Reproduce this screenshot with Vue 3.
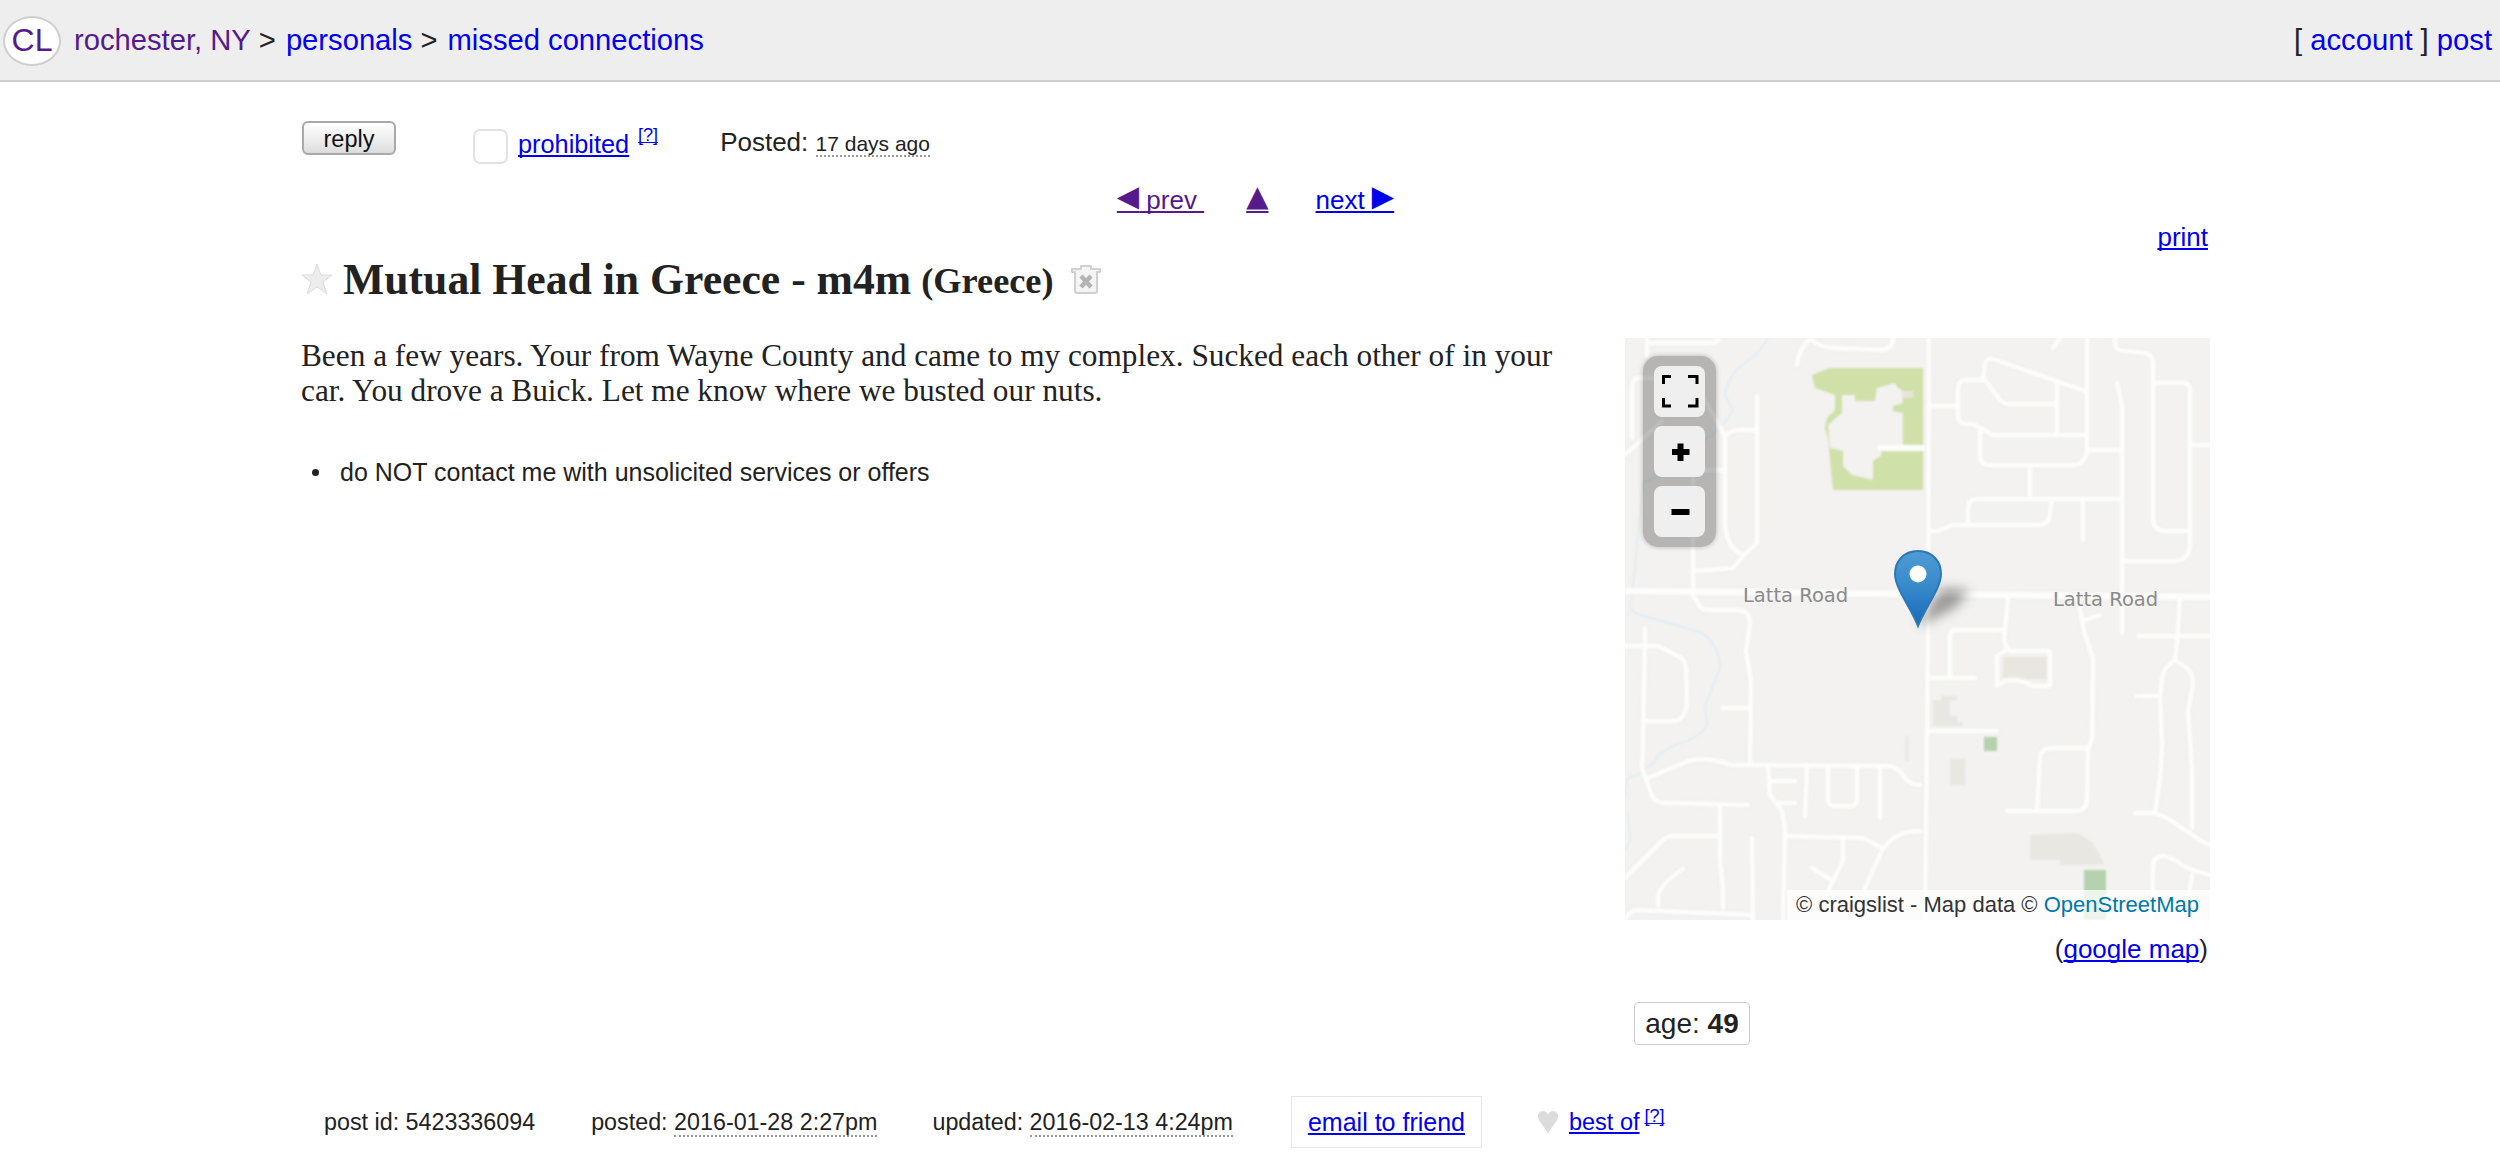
<script setup>
const roads = [
  'M0 253 L585 259',
  'M304 0 L303 300 L300 582',
  'M22 0 L22 18',
  'M22 5 L85 5 Q92 5 94 0',
  'M7 100 L7 48 Q7 40 14 40 L30 40',
  'M0 117 L37 83',
  'M68 140 L68 258 L72 263 Q74 272 84 272 L112 272 Q125 272 125 285 L121 313 L126 343 L125 427',
  'M77 57 L100 98 L100 187 Q101 200 108 210 L118 218 L108 230 L72 233',
  'M132 58 L132 205 L118 218',
  'M100 98 Q106 92 114 92 L132 92',
  'M70 132 L98 132',
  'M172 27 Q174 10 185 1 Q195 10 210 10 L258 12 Q268 10 268 0',
  'M428 10 L435 0',
  'M303 68 L333 68',
  'M360 42 L340 42 Q333 42 333 50 L333 78 Q333 86 342 86 L348 86 L368 97 L462 97',
  'M358 40 L360 26 Q361 20 368 21 L460 53',
  'M360 42 L372 58 Q376 66 385 66 L432 66',
  'M432 47 L432 97',
  'M462 0 L462 108 Q462 127 448 127 L365 127 Q355 127 355 118 L355 93',
  'M462 112 L497 112',
  'M492 45 L497 67 L497 295',
  'M490 0 L490 6 Q491 13 500 13 L520 15 Q528 16 528 26 L528 180 Q528 193 540 193 L565 193',
  'M528 45 L558 45 Q565 45 565 52 L565 205 Q565 223 548 223 L497 223',
  'M567 107 L585 107',
  'M405 130 L405 157',
  'M303 193 L313 193 L327 187 L412 187 Q425 187 425 175 L427 162',
  'M343 187 L343 170 Q343 161 352 161 L497 161',
  'M458 161 L458 202',
  'M383 260 L380 292 L328 292 L325 296 L325 340',
  'M302 340 L350 340',
  'M380 292 Q377 307 385 313 L425 313 L425 348 L407 348 Q395 340 380 343 L372 348 L372 318 L380 313',
  'M302 393 L372 393',
  'M453 262 L460 297 L468 320 L467 400 L463 412 L462 460 Q462 473 450 473 L382 473',
  'M460 282 L475 277',
  'M462 410 L428 410 Q415 410 415 420 L412 473',
  'M513 298 L585 298',
  'M555 260 L552 305 L550 322 Q538 330 537 340 L535 360 L537 407 L535 440 L530 475',
  'M550 322 L562 330 Q568 334 568 347 L563 373 L567 430 L567 490',
  'M512 358 L533 358',
  'M510 475 L527 475 Q535 476 547 483 L567 497 Q575 503 585 507',
  'M527 582 L528 528 Q529 517 540 518 L552 523 Q560 531 585 537',
  'M567 537 L560 582',
  'M20 290 L18 407 L17 430 L27 458 Q30 465 40 465 L123 467',
  'M0 308 L33 308 L55 319 Q61 323 61 332 L62 365 Q60 383 48 383 L20 383',
  'M97 370 L125 370',
  'M23 440 L63 423 Q80 418 107 427 L265 428 Q274 430 280 440 Q287 447 295 447',
  'M143 428 L145 457 L157 473 L160 490 L158 582',
  'M147 443 L170 443',
  'M152 465 L170 465',
  'M182 430 L180 478',
  'M203 430 L203 462 Q203 468 210 468 L225 468 Q232 468 232 462 L232 430',
  'M255 430 L255 480',
  'M95 467 L95 523 L98 550 L98 570',
  'M0 540 L38 502 Q42 498 50 498 L93 498',
  'M33 567 L33 558 Q36 545 58 531',
  'M127 500 L128 582',
  'M0 582 Q4 572 12 572 L128 577',
  'M160 498 L238 500 L257 510',
  'M295 493 Q275 493 265 503 L257 512 L240 550 L230 582',
  'M218 503 L218 523 L203 553 L190 573',
  'M187 530 L208 543'
]
const water = [
  'M143 0 Q135 15 120 25 Q104 35 100 57 L108 72 Q102 85 85 98 Q72 110 50 130 L18 145 Q12 200 10 233 L5 267 Q6 276 20 278 L77 295 Q95 308 95 330 L80 368 L82 387 Q75 400 50 407 L33 417 L30 423 L17 435 L3 440 L0 457',
  'M3 477 L5 503 L0 512'
]
</script>

<template>
  <div class="page">
    <header class="topbar">
      <div class="crumbs">
        <a class="logo visited">CL</a>
        <a class="visited link">rochester, NY</a>
        <span class="sep">&gt;</span>
        <a class="link">personals</a>
        <span class="sep">&gt;</span>
        <a class="link">missed connections</a>
      </div>
      <div class="account">
        <span>[</span> <a class="link">account</a> <span>]</span> <a class="link">post</a>
      </div>
    </header>

    <main class="content">
      <div class="actions">
        <button class="reply" type="button">reply</button>
        <span class="flagbox"></span>
        <a class="link underline prohibited">prohibited</a>
        <sup class="help"><a class="link underline">[?]</a></sup>
        <span class="posted">Posted: <time class="dotted small">17 days ago</time></span>
      </div>

      <nav class="pager">
        <a class="visited underline"><span class="arrow">◀</span> prev&nbsp;</a>
        <a class="visited underline"><span class="arrow">▲</span></a>
        <a class="link underline next">next <span class="arrow">▶</span></a>
      </nav>

      <div class="printrow"><a class="link underline">print</a></div>

      <h1 class="title">
        <svg class="star" viewBox="0 0 30 30" aria-hidden="true">
          <polygon points="15,0 19,11 30,11 21,18 25,30 15,23 5,30 9,18 0,11 11,11" fill="#ececec" stroke="#dcdcdc" stroke-width="1" />
        </svg>
        <span class="title-main">Mutual Head in Greece - m4m</span>
        <small class="title-place">(Greece)</small>
        <svg class="trash" viewBox="0 0 32 32" aria-hidden="true">
          <path d="M11 3 L21 3 L21 6 L30 6 L30 9 L27 9 L27 28 Q27 30 25 30 L7 30 Q5 30 5 28 L5 9 L2 9 L2 6 L11 6 Z" fill="#f4f4f4" stroke="#d0d0d0" stroke-width="2" stroke-linejoin="round" />
          <path d="M11 13 L21 24 M21 13 L11 24" stroke="#b4b4b4" stroke-width="4.5" fill="none" />
        </svg>
      </h1>

      <div class="columns">
        <section class="body">
          <p class="message">Been a few years. Your from Wayne County and came to my complex. Sucked each other of in your car. You drove a Buick. Let me know where we busted our nuts.</p>
          <ul class="notices">
            <li>do NOT contact me with unsolicited services or offers</li>
          </ul>
        </section>

        <aside class="side">
          <div class="map">
            <svg class="mapsvg" viewBox="0 0 585 582" width="585" height="582" aria-hidden="true">
              <defs>
                <linearGradient id="pinfill" x1="0" y1="0" x2="0" y2="1">
                  <stop offset="0" stop-color="#4f9bd4" />
                  <stop offset="0.45" stop-color="#3a8bcb" />
                  <stop offset="1" stop-color="#1568bd" />
                </linearGradient>
                <filter id="soft"><feGaussianBlur stdDeviation="0.8" /></filter>
                <filter id="shadow" x="-40%" y="-40%" width="180%" height="180%"><feGaussianBlur stdDeviation="6" /></filter>
              </defs>
              <rect width="585" height="582" fill="#f3f2f0" />
              <g filter="url(#soft)">
                <path d="M187 37 L205 30 L298 30 L298 152 L208 152 L203 100 L200 90 L202 80 L210 72 L210 57 L190 50 Z M217 57 L230 57 L230 63 L250 63 L252 50 L270 45 L273 50 L277 52 L278 65 L268 68 L268 73 L278 75 L278 107 L253 107 L257 117 L248 123 L248 142 L227 137 L218 128 L218 113 L205 110 L203 87 L213 78 L217 75 Z" fill="#cfe0a8" fill-rule="evenodd" />
                <rect x="277" y="53" width="11" height="7" fill="#e6e5dc" />
                <path d="M308 362 L316 362 L316 358 L332 358 L332 362 L325 362 L325 378 L332 378 L332 384 L338 384 L338 388 L308 388 Z" fill="#e8e7e2" />
                <rect x="325" y="421" width="15" height="26" fill="#e8e7e2" />
                <rect x="280" y="398" width="4" height="25" fill="#ebeae5" />
                <path d="M405 497 L450 495 Q470 500 479 527 L435 527 L435 522 L405 522 Z" fill="#e8e7e2" />
                <rect x="378" y="319" width="44" height="22" fill="#e9e6df" />
                <rect x="359" y="399" width="13" height="14" fill="#b5d1ae" />
                <rect x="459" y="532" width="22" height="50" fill="#b5d1ae" />
                <path v-for="(d, i) in water" :key="'w' + i" :d="d" fill="none" stroke="#dde9f3" stroke-width="1.4" />
                <path v-for="(d, i) in roads" :key="'c' + i" :d="d" fill="none" stroke="#ecebe6" stroke-width="7" stroke-linecap="round" stroke-linejoin="round" />
                <path d="M0 253 L585 259" fill="none" stroke="#ecebe6" stroke-width="9" />
                <path v-for="(d, i) in roads" :key="'r' + i" :d="d" fill="none" stroke="#fdfdfc" stroke-width="5" stroke-linecap="round" stroke-linejoin="round" />
                <path d="M0 253 L585 259" fill="none" stroke="#fdfdfc" stroke-width="7" />
                <path d="M253 110 L300 110" fill="none" stroke="#fdfdfc" stroke-width="6" />
              </g>
              <text x="118" y="264" class="road">Latta Road</text>
              <text x="428" y="268" class="road">Latta Road</text>
              <polygon points="292,288 316,250 345,252 330,270 300,285" fill="#555" opacity="0.55" filter="url(#shadow)" />
              <path d="M293 213 C308 213 316 224 316 236 C316 250 300 270 293 288 C286 270 270 250 270 236 C270 224 278 213 293 213 Z" fill="url(#pinfill)" stroke="#2a79b6" stroke-width="2" />
              <circle cx="293" cy="236" r="8.5" fill="#fff" />
            </svg>

            <div class="controls">
              <button class="ctl" type="button" aria-label="fullscreen">
                <svg viewBox="0 0 51 51" width="51" height="51">
                  <path d="M9.5 18 V10.5 H17 M34 10.5 H43 V18 M9.5 32 V40 H17 M34 40 H43 V32" fill="none" stroke="#000" stroke-width="3" />
                </svg>
              </button>
              <button class="ctl" type="button" aria-label="zoom in">
                <svg viewBox="0 0 51 51" width="51" height="51">
                  <path d="M26.5 17.5 V35 M18 26 H35.5" fill="none" stroke="#000" stroke-width="6" />
                </svg>
              </button>
              <button class="ctl" type="button" aria-label="zoom out">
                <svg viewBox="0 0 51 51" width="51" height="51">
                  <path d="M17.5 26 H35.5" fill="none" stroke="#000" stroke-width="6" />
                </svg>
              </button>
            </div>

            <div class="attribution">© craigslist - Map data © <a class="osm">OpenStreetMap</a></div>
          </div>

          <div class="gmap">(<a class="link underline">google map</a>)</div>
          <div class="attrs"><span class="age">age: <b>49</b></span></div>
        </aside>
      </div>

      <footer class="meta">
        <span class="m-id">post id: 5423336094</span>
        <span class="m-posted">posted: <time class="dotted">2016-01-28 2:27pm</time></span>
        <span class="m-updated">updated: <time class="dotted">2016-02-13 4:24pm</time></span>
        <span class="m-email"><a class="link underline">email to friend</a></span>
        <svg class="heart" viewBox="0 0 20 23" aria-hidden="true">
          <path d="M10 23 C8 17 0 11 0 5.5 C0 2 2.5 0 5 0 C7.5 0 9.3 1.5 10 4 C10.7 1.5 12.5 0 15 0 C17.5 0 20 2 20 5.5 C20 11 12 17 10 23 Z" fill="#dcdcdc" />
        </svg>
        <a class="link underline m-best">best of</a>
        <sup class="help"><a class="link underline">[?]</a></sup>
      </footer>
    </main>
  </div>
</template>

<style>
html, body { margin: 0; background: #fff; }
</style>

<style scoped>
.page {
  width: 2500px;
  height: 1160px;
  overflow: hidden;
  font-family: "Liberation Sans", Arial, sans-serif;
  color: #222;
  background: #fff;
}
a { cursor: pointer; }
.link { color: #0000ee; }
.visited { color: #551a8b; }
.underline { text-decoration: underline; text-decoration-skip-ink: none; }

.topbar {
  height: 80px;
  border-bottom: 2px solid #cfcfcf;
  background: #eeeeee;
  display: flex;
  justify-content: space-between;
  align-items: center;
  font-size: 29.2px;
  padding-left: 3px;
  padding-right: 8px;
}
.crumbs { display: flex; align-items: center; }
.crumbs .sep { margin: 0 10px 0 8px; }
.logo {
  box-sizing: border-box;
  width: 58px;
  height: 50px;
  margin-right: 13px;
  margin-top: 1px;
  border: 2px solid #cfcfcf;
  border-radius: 50%;
  background: #fff;
  display: flex;
  align-items: center;
  justify-content: center;
  font-size: 32px;
}

.content { margin-left: 301px; width: 1909px; }

.actions {
  display: flex;
  align-items: flex-start;
  height: 54px;
  padding-top: 39px;
  font-size: 25.3px;
}
.reply {
  box-sizing: border-box;
  width: 94px;
  height: 34px;
  margin-left: 1px;
  padding: 3px 0 0;
  border: 2px solid #a9a9a9;
  border-radius: 6px;
  background: linear-gradient(#ffffff, #e8e8e8 70%, #dcdcdc);
  font: 23.5px "Liberation Sans", Arial, sans-serif;
  color: #111;
}
.flagbox {
  box-sizing: border-box;
  width: 35px;
  height: 35px;
  margin-left: 77px;
  margin-top: 8px;
  border: 2px solid #e2e2e2;
  border-radius: 7px;
  background: #fff;
}
.prohibited { margin-left: 10px; margin-top: 9px; }
.help { font-size: 18px; line-height: 1; margin-left: 9px; vertical-align: top; }
.actions .help { margin-top: 5px; }
.posted { margin-left: 62px; margin-top: 6px; font-size: 26px; }
.small { font-size: 21px; }
.dotted { border-bottom: 2px dotted #999; }

.pager {
  display: flex;
  justify-content: center;
  gap: 42px;
  height: 40px;
  margin-top: 5px;
  font-size: 26px;
  line-height: 40px;
}
.pager .next { margin-left: 5px; }
.arrow { font-family: "DejaVu Sans", sans-serif; font-size: 29px; line-height: 1; vertical-align: 3px; }

.printrow {
  text-align: right;
  font-size: 26px;
  line-height: 30px;
  margin-top: 2px;
  padding-right: 2px;
}

.title {
  display: flex;
  align-items: center;
  height: 46px;
  margin: 4px 0 0;
  font-family: "Liberation Serif", "Times New Roman", serif;
  font-weight: 700;
  font-size: 43.7px;
  color: #222;
}
.star { width: 30px; height: 30px; margin-left: 1px; }
.title-main { margin-left: 11px; }
.title-place { font-size: 36.3px; margin-left: 10px; margin-top: 4px; }
.trash { width: 32px; height: 32px; margin-left: 16px; }

.columns {
  display: flex;
  justify-content: space-between;
  margin-top: 36px;
}
.body { width: 1265px; }
.message {
  margin: 0;
  font-family: "Liberation Serif", "Times New Roman", serif;
  font-size: 31.3px;
  line-height: 35px;
}
.notices {
  margin: 49px 0 0;
  padding: 0;
  list-style: none;
  font-size: 25px;
  line-height: 30px;
}
.notices li { display: flex; align-items: center; padding-left: 11px; }
.notices li::before {
  content: "";
  width: 7px;
  height: 7px;
  margin-right: 21px;
  border-radius: 50%;
  background: #222;
}

.side { width: 585px; }
.map { position: relative; width: 585px; height: 582px; overflow: hidden; }
.mapsvg { display: block; }
.road {
  font-family: "DejaVu Sans", sans-serif;
  font-size: 19.5px;
  fill: #8a8a8a;
  stroke: #f6f5f3;
  stroke-width: 2px;
  paint-order: stroke;
}
.controls {
  position: absolute;
  left: 18px;
  top: 18px;
  box-sizing: border-box;
  width: 73px;
  height: 191px;
  padding: 10px 11px;
  display: flex;
  flex-direction: column;
  gap: 9px;
  border-radius: 15px;
  background: rgba(0, 0, 0, 0.25);
  box-shadow: 0 0 5px rgba(0, 0, 0, 0.25);
}
.ctl {
  width: 51px;
  height: 51px;
  padding: 0;
  border: 0;
  border-radius: 8px;
  background: #efefef;
}
.ctl svg { display: block; }
.attribution {
  position: absolute;
  right: 0;
  bottom: 0;
  box-sizing: border-box;
  width: 423px;
  height: 30px;
  padding-right: 11px;
  text-align: right;
  background: rgba(255, 255, 255, 0.75);
  color: #333;
  font-size: 22px;
  line-height: 30px;
  white-space: nowrap;
}
.osm { color: #0078a8; }
.gmap {
  text-align: right;
  font-size: 26px;
  line-height: 30px;
  margin-top: 14px;
  padding-right: 2px;
}
.attrs { margin-top: 38px; padding-left: 9px; }
.age {
  display: inline-block;
  box-sizing: border-box;
  width: 116px;
  height: 43px;
  border: 1px solid #ccc;
  border-radius: 4px;
  text-align: center;
  font-size: 28px;
  line-height: 41px;
}

.meta {
  display: flex;
  align-items: center;
  height: 52px;
  margin-top: 51px;
  font-size: 23.3px;
}
.m-id { margin-left: 23px; }
.m-posted { margin-left: 56px; }
.m-updated { margin-left: 55px; }
.m-email {
  box-sizing: border-box;
  height: 52px;
  margin-left: 58px;
  padding: 0 16px;
  border: 1px solid #e6e6e6;
  font-size: 25px;
  line-height: 50px;
}
.heart { width: 20px; height: 23px; margin-left: 56px; }
.m-best { margin-left: 11px; font-size: 23.5px; }
.meta .help { margin-bottom: 12px; margin-left: 5px; }
</style>
